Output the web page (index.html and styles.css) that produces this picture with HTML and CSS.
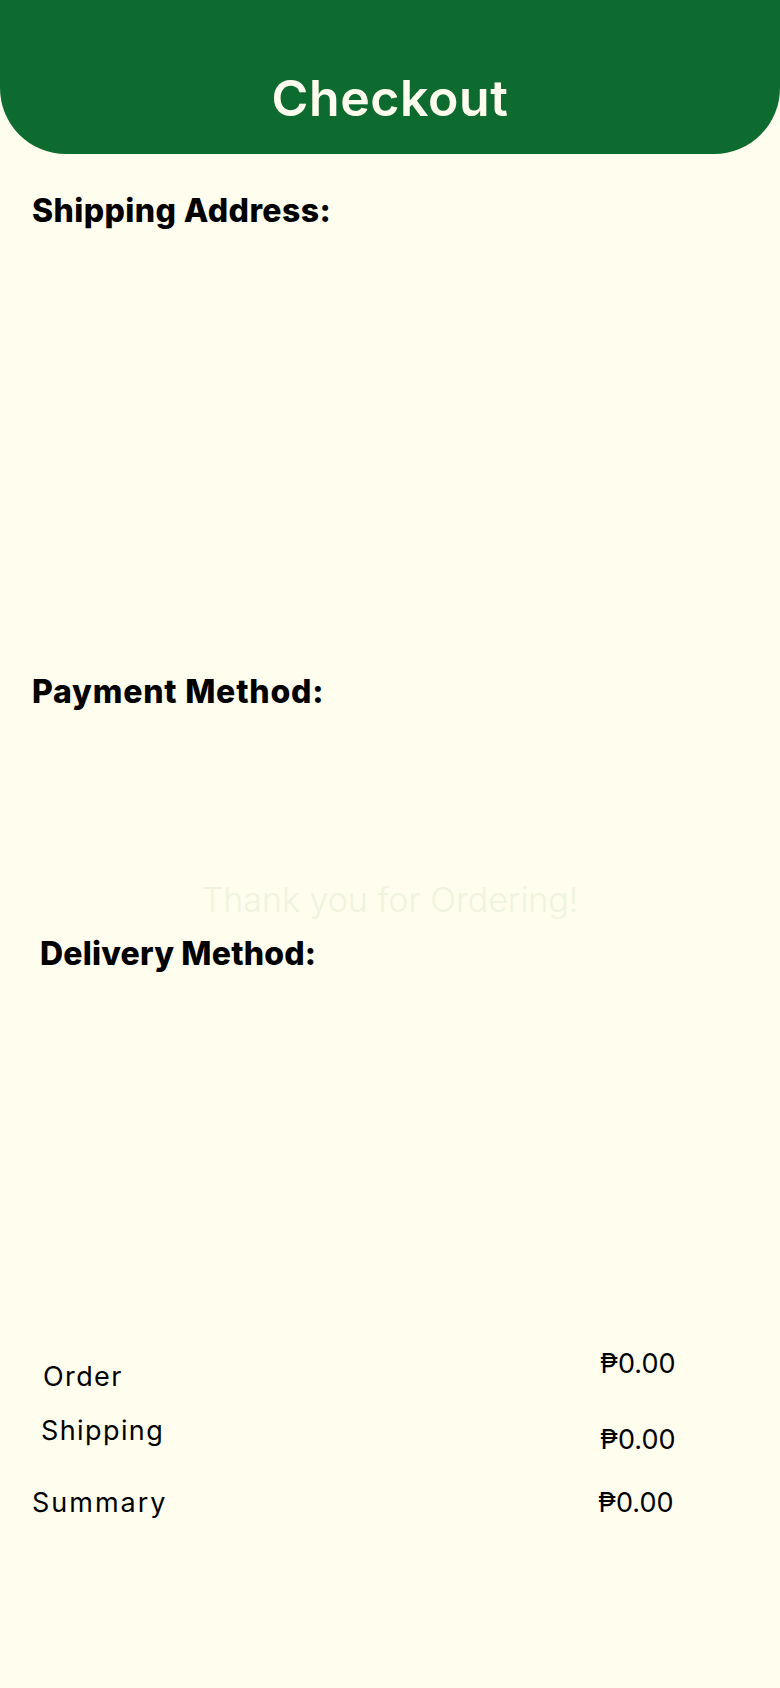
FILE: index.html
```html
<!DOCTYPE html>
<html lang="en">
<head>
    <meta charset="UTF-8">
    <meta name="viewport" content="width=device-width, initial-scale=1.0">
    <title>Checkout</title>
    <link rel="stylesheet" href="styles.css">
</head>
<body>
    <header class="topbar">
        <h1 class="title">Checkout</h1>
    </header>
    <main class="content">
        <section class="block address">
            <h2 class="heading">Shipping Address:</h2>
            <div class="block-body"></div>
        </section>
        <section class="block payment">
            <h2 class="heading">Payment Method:</h2>
            <div class="block-body"></div>
        </section>
        <p class="thanks">Thank you for Ordering!</p>
        <section class="block delivery">
            <h2 class="heading">Delivery Method:</h2>
            <div class="block-body"></div>
        </section>
        <div class="summary">
            <div class="row order">
                <p class="label">Order</p>
                <p class="amount">₱0.00</p>
            </div>
            <div class="row shipping">
                <p class="label">Shipping</p>
                <p class="amount">₱0.00</p>
            </div>
            <div class="row total">
                <p class="label">Summary</p>
                <p class="amount">₱0.00</p>
            </div>
        </div>
    </main>
</body>
</html>
```

FILE: styles.css
```css
*{
    box-sizing: border-box;
}

body{
    margin: 0;
    width: 780px;
    min-height: 1688px;
    background: #FFFDEE;
    font-family: 'Inter', 'Noto Sans', sans-serif;
    color: #000;
}

.topbar{
    height: 154px;
    background: #0E6B2F;
    border-radius: 0 0 66px 66px;
    display: flex;
    align-items: flex-end;
    justify-content: center;
    padding-bottom: 28px;
}

.title{
    margin: 0;
    font-size: 50px;
    line-height: 56px;
    font-weight: 600;
    letter-spacing: 0.6px;
    color: #FFFDEE;
}

.content{
    padding: 37px 0 0 32px;
}

.heading{
    margin: 0;
    font-size: 32px;
    line-height: 40px;
    font-weight: 800;
    letter-spacing: 0.4px;
}

.payment .heading{
    letter-spacing: 0.8px;
}

.address .block-body{
    height: 441px;
}

.payment .block-body{
    height: 168px;
}

.thanks{
    margin: 0 0 14px;
    padding-right: 32px;
    text-align: center;
    font-size: 34px;
    line-height: 40px;
    font-weight: 300;
    color: #EEF4DE;
}

.delivery .heading{
    margin-left: 8px;
    letter-spacing: 0.2px;
}

.delivery .block-body{
    height: 372px;
}

.row{
    display: grid;
    grid-template-columns: 566px auto;
    align-items: start;
}

.label, .amount{
    margin: 0;
    font-size: 27px;
    line-height: 36px;
}

.label{
    letter-spacing: 1.4px;
}

.order .label{
    margin: 13px 0 0 11px;
}

.shipping{
    margin-top: 18px;
}

.shipping .label{
    margin-left: 9px;
}

.shipping .amount{
    margin-top: 9px;
}

.total{
    margin-top: 27px;
}

.total .label{
    letter-spacing: 2px;
}

.order .amount, .shipping .amount{
    margin-left: 2px;
}
```
